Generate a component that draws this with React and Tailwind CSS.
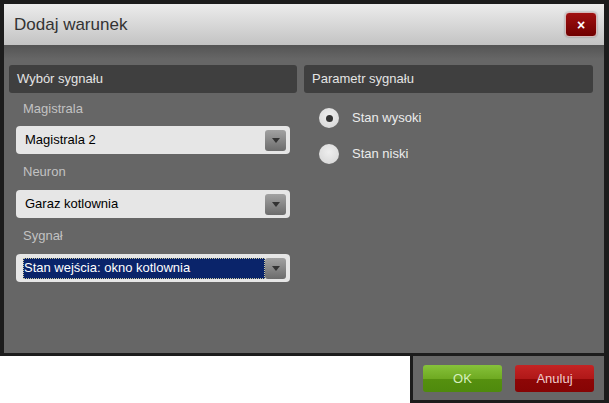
import React from "react";

function Arrow() {
  return (
    <div className="w-[21px] h-[21px] rounded-[3px] bg-[linear-gradient(to_bottom,#a2a2a2,#6c6c6c)] flex items-center justify-center shrink-0">
      <svg width="8" height="5" viewBox="0 0 8 5"><path d="M0 0 L8 0 L4 5 Z" fill="#333" /></svg>
    </div>
  );
}

function Select({ value, selected }) {
  return (
    <div className="mx-[7px] h-[28px] rounded-[4px] bg-[#e6e6e6] flex items-center pl-[7px] pr-[4px]">
      {selected ? (
        <div className="flex-1 h-[21px] bg-[#0a246a] text-white flex items-center pl-[1px] outline-1 outline-dotted outline-[#c8c8a0] -outline-offset-1">
          {value}
        </div>
      ) : (
        <div className="flex-1 pl-[2px] text-black">{value}</div>
      )}
      <Arrow />
    </div>
  );
}

function Radio({ checked, label }) {
  return (
    <div className="flex items-center h-[20px] pl-[15px]">
      <div className="w-[20px] h-[20px] rounded-full bg-[radial-gradient(circle_at_50%_40%,#eeeeee,#d4d4d4)] flex items-center justify-center">
        {checked && <div className="w-[7px] h-[7px] rounded-full bg-[#333]" />}
      </div>
      <span className="ml-[13px] text-[#ececec]">{label}</span>
    </div>
  );
}

export default function App() {
  return (
    <div
      className="w-[609px] h-[403px] bg-white flex flex-col text-[13px] overflow-hidden"
      style={{ fontFamily: '"Liberation Sans", Arial, sans-serif' }}
    >
      <div className="h-[356px] bg-[#1c1c1c] pt-[4px] pl-[4px] pr-[5px] pb-[3px] flex flex-col">
        <div className="h-[41px] bg-[linear-gradient(to_bottom,#ececec,#c3c3c3)] flex items-center justify-between pl-[10px] pr-[7px]">
          <span className="text-[17px] text-[#333]">Dodaj warunek</span>
          <div className="w-[32px] h-[25px] rounded-[4px] border border-[#d6b8b8] bg-[linear-gradient(to_bottom,#a01010,#700000)] flex items-center justify-center shadow-[0_0_2px_rgba(0,0,0,0.4)]">
            <span className="text-white font-bold text-[14px] leading-none">×</span>
          </div>
        </div>
        <div className="flex-1 bg-[linear-gradient(to_bottom,#545454_0px,#666666_14px)] pt-[20px] pl-[5px] pr-[11px] flex gap-[7px]">
          <div className="w-[288px] flex flex-col">
            <div className="h-[28px] rounded-[3px] bg-[#3f3f3f] flex items-center pl-[8px] text-[#e4e4e4]">Wybór sygnału</div>
            <div className="h-[33px] flex items-center pl-[14px] pb-[1px] text-[#c2c2c2]">Magistrala</div>
            <Select value="Magistrala 2" />
            <div className="h-[36px] flex items-center pl-[14px] text-[#c2c2c2]">Neuron</div>
            <Select value="Garaz kotlownia" />
            <div className="h-[36px] flex items-center pl-[14px] text-[#c2c2c2]">Sygnał</div>
            <Select value="Stan wejścia: okno kotlownia" selected />
          </div>
          <div className="flex-1 flex flex-col">
            <div className="h-[28px] rounded-[3px] bg-[#3f3f3f] flex items-center pl-[8px] text-[#e4e4e4]">Parametr sygnału</div>
            <div className="h-[15px]" />
            <Radio checked label="Stan wysoki" />
            <div className="h-[16px]" />
            <Radio label="Stan niski" />
          </div>
        </div>
      </div>
      <div className="flex-1 flex">
        <div className="w-[410px] bg-white" />
        <div className="flex-1 bg-[#1c1c1c] pl-[3px] pr-[5px] pb-[3px] flex">
          <div className="flex-1 bg-[#676767] flex items-start pt-[9px] pl-[10px] gap-[13px]">
            <div className="w-[79px] h-[27px] rounded-[3px] bg-[linear-gradient(to_bottom,#86c23a_0%,#6faa22_50%,#55900f_52%,#4f8a0d_100%)] flex items-center justify-center text-[#d6efbf]">OK</div>
            <div className="w-[79px] h-[27px] rounded-[3px] bg-[linear-gradient(to_bottom,#c42424_0%,#b01818_50%,#8e0606_52%,#860404_100%)] flex items-center justify-center text-[#f0cccc]">Anuluj</div>
          </div>
        </div>
      </div>
    </div>
  );
}
